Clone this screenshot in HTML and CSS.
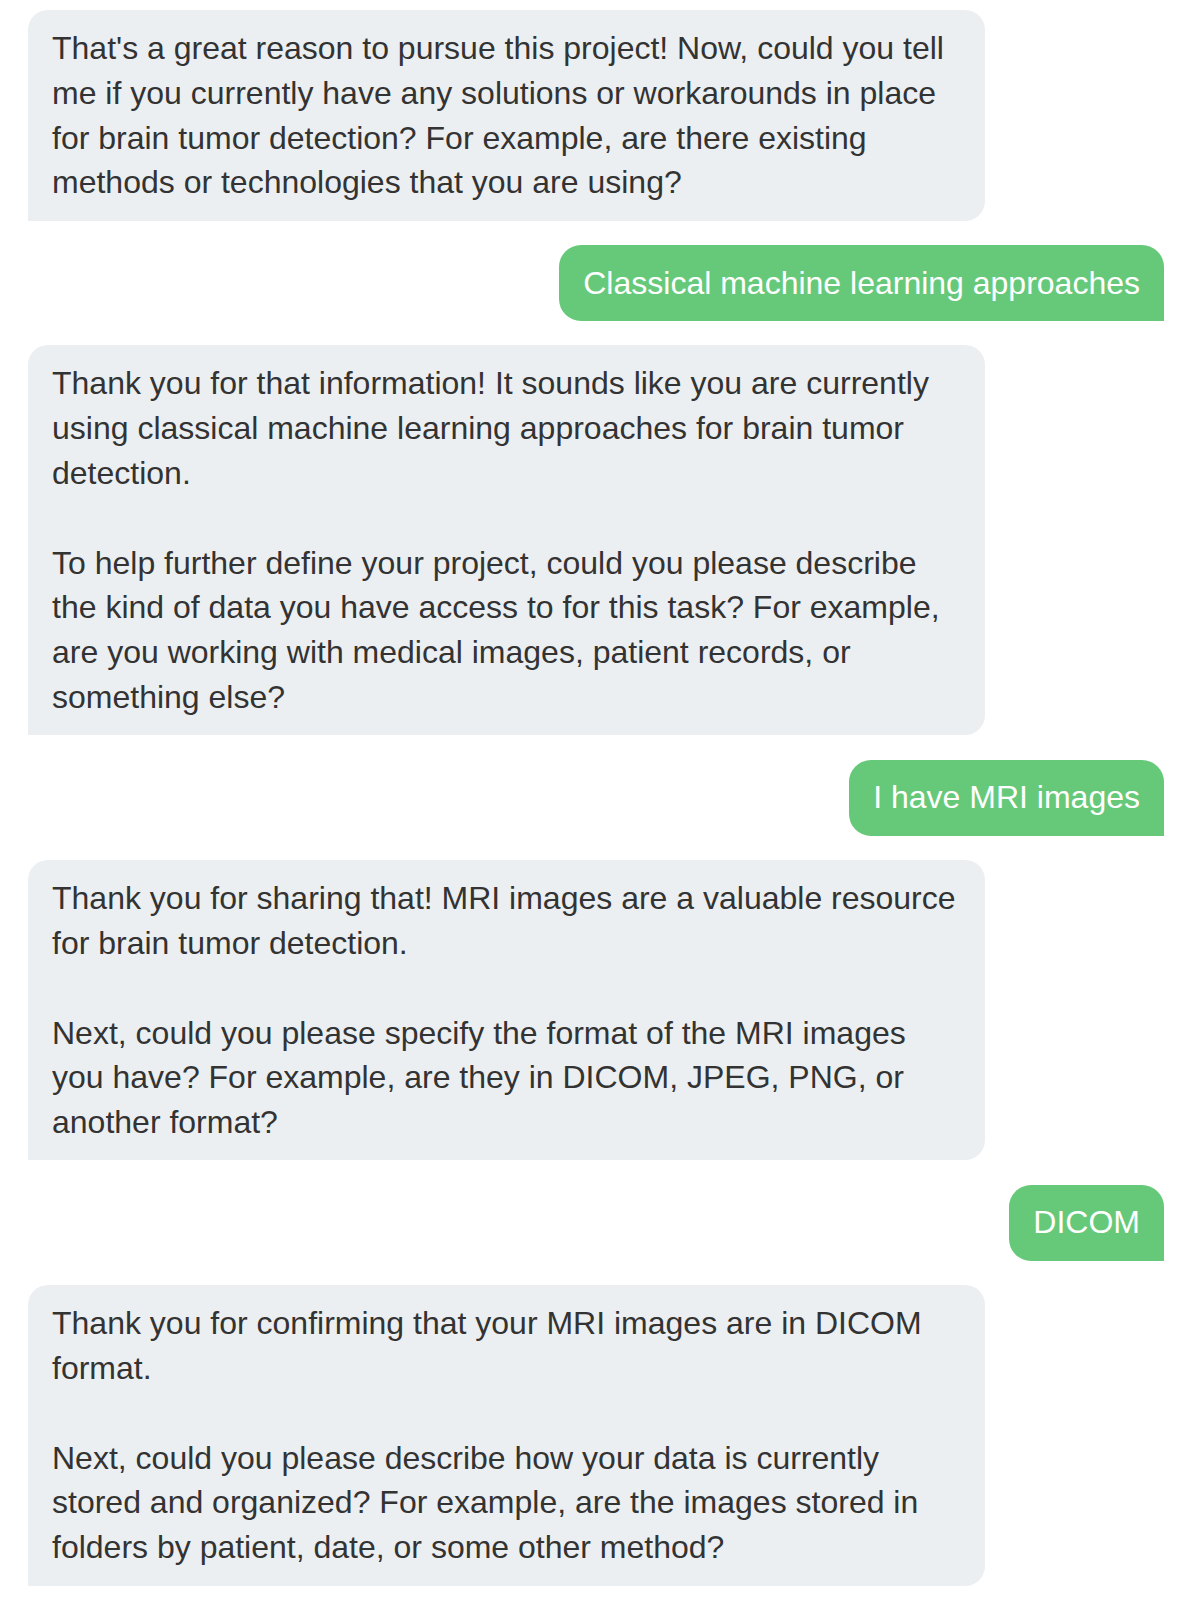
FILE: index.html
```html
<!DOCTYPE html>
<html>
<head>
<meta charset="utf-8">
<link rel="stylesheet" href="styles.css">
</head>
<body>
<div class="chat">
  <div class="msg bot">That's a great reason to pursue this project! Now, could you tell me if you currently have any solutions or workarounds in place for brain tumor detection? For example, are there existing methods or technologies that you are using?</div>
  <div class="msg user">Classical machine learning approaches</div>
  <div class="msg bot">Thank you for that information! It sounds like you are currently using classical machine learning approaches for brain tumor detection.<br><br>To help further define your project, could you please describe the kind of data you have access to for this task? For example, are you working with medical images, patient records, or something else?</div>
  <div class="msg user">I have MRI images</div>
  <div class="msg bot">Thank you for sharing that! MRI images are a valuable resource for brain tumor detection.<br><br>Next, could you please specify the format of the MRI images you have? For example, are they in DICOM, JPEG, PNG, or another format?</div>
  <div class="msg user">DICOM</div>
  <div class="msg bot">Thank you for confirming that your MRI images are in DICOM format.<br><br>Next, could you please describe how your data is currently stored and organized? For example, are the images stored in folders by patient, date, or some other method?</div>
</div>
</body>
</html>
```

FILE: styles.css
```css
html, body {
  margin: 0;
  padding: 0;
  background: #ffffff;
}

.chat {
  display: flex;
  flex-direction: column;
  gap: 24.5px;
  padding: 10px 14px 0 28px;
  font-family: "Liberation Sans", Arial, sans-serif;
  font-size: 32px;
  line-height: 44.8px;
}

.msg {
  box-sizing: border-box;
}

.bot {
  align-self: flex-start;
  width: 957px;
  padding: 16px 24px 15.5px;
  background: #eceff1;
  color: #333333;
  border-radius: 20px 20px 20px 0;
}

.user {
  align-self: flex-end;
  padding: 15.5px 24px;
  background: #66c97a;
  color: #ffffff;
  border-radius: 22px 22px 0 22px;
}
```
